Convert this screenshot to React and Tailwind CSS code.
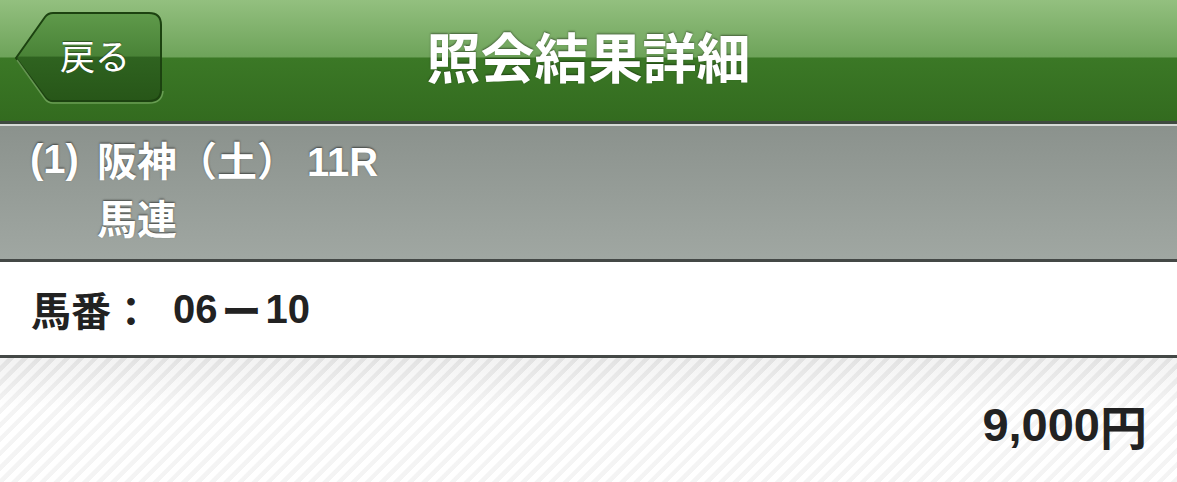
import React from "react";

function BackButton() {
  return (
    <div className="absolute left-[14px] top-[12px] w-[150px] h-[92px]">
      <svg width="150" height="92" viewBox="0 0 150 92" className="absolute inset-0">
        <defs>
          <linearGradient id="bb" x1="0" y1="0" x2="0" y2="1">
            <stop offset="0" stopColor="#5f9a4b" />
            <stop offset="0.49" stopColor="#4a8337" />
            <stop offset="0.5" stopColor="#2f6320" />
            <stop offset="1" stopColor="#275618" />
          </linearGradient>
        </defs>
        <path
          d="M2 46 L31 5 Q34 1 39 1 L135 1 Q147 1 147 13 L147 77 Q147 89 135 89 L39 89 Q34 89 31 85 Z"
          fill="url(#bb)"
          stroke="#1c4210"
          strokeWidth="2"
        />
        <path
          d="M3 48 L31 87 Q34 91 39 91 L135 91 Q148 91 149 79"
          fill="none"
          stroke="#7fb06a"
          strokeWidth="1.5"
          opacity="0.7"
        />
      </svg>
      <div className="absolute left-[46px] top-[21px] text-[35px] leading-[44px] text-white font-['Noto_Sans_CJK_JP',sans-serif] font-normal [text-shadow:0_-1px_1px_rgba(0,0,0,0.4)]">
        戻る
      </div>
    </div>
  );
}

export default function App() {
  return (
    <div className="w-[1177px] h-[482px] overflow-hidden flex flex-col font-['Noto_Sans_CJK_JP',sans-serif]">
      <div className="relative h-[121px] shrink-0 flex items-center justify-center bg-[linear-gradient(to_bottom,#93c07f_0%,#6ea35a_47%,#3b7826_48%,#336b1f_100%)]">
        <BackButton />
        <div className="text-white font-bold text-[54px] leading-none [text-shadow:0_-1px_2px_rgba(0,0,0,0.45)] mt-[-10px]">
          照会結果詳細
        </div>
      </div>
      <div className="h-[3px] bg-[#3f4a40] shrink-0" />
      <div className="h-[2px] bg-[#d6dad7] shrink-0" />
      <div className="h-[133px] shrink-0 bg-[linear-gradient(to_bottom,#8b928d,#a0a7a2)] pl-[30px] pt-[6px]">
        <div className="text-white font-bold text-[40px] leading-[55px] [text-shadow:0_-1px_2px_rgba(0,0,0,0.55)]">
          <div className="flex">
            <span className="w-[67px] font-['Liberation_Sans',sans-serif]">(1)</span>
            <span>阪神（土）<span className="ml-[10px] font-['Liberation_Sans',sans-serif]">11R</span></span>
          </div>
          <div className="pl-[67px]">馬連</div>
        </div>
      </div>
      <div className="h-[3px] bg-[#444846] shrink-0" />
      <div className="h-[93px] shrink-0 bg-white flex items-center pl-[31px] text-[#222] font-bold text-[40px]">
        <span>馬番：</span>
        <span className="ml-[22px] font-['Liberation_Sans',sans-serif]">06</span>
        <span className="mx-[4px]">ー</span>
        <span className="font-['Liberation_Sans',sans-serif]">10</span>
      </div>
      <div className="h-[3px] bg-[#444846] shrink-0" />
      <div className="flex-1 relative bg-[repeating-linear-gradient(135deg,#ffffff_0px,#ffffff_5px,#eeeeee_6px,#eeeeee_10px)]">
        <div className="absolute inset-0 bg-[linear-gradient(to_bottom,rgba(0,0,0,0.05),rgba(255,255,255,0.35)_40%,rgba(255,255,255,0.35))]" />
        <div className="relative flex justify-end pr-[30px] pt-[43px] text-[#222] font-bold text-[47px] leading-none">
          <span className="font-['Liberation_Sans',sans-serif]">9,000</span>
          <span>円</span>
        </div>
      </div>
    </div>
  );
}
